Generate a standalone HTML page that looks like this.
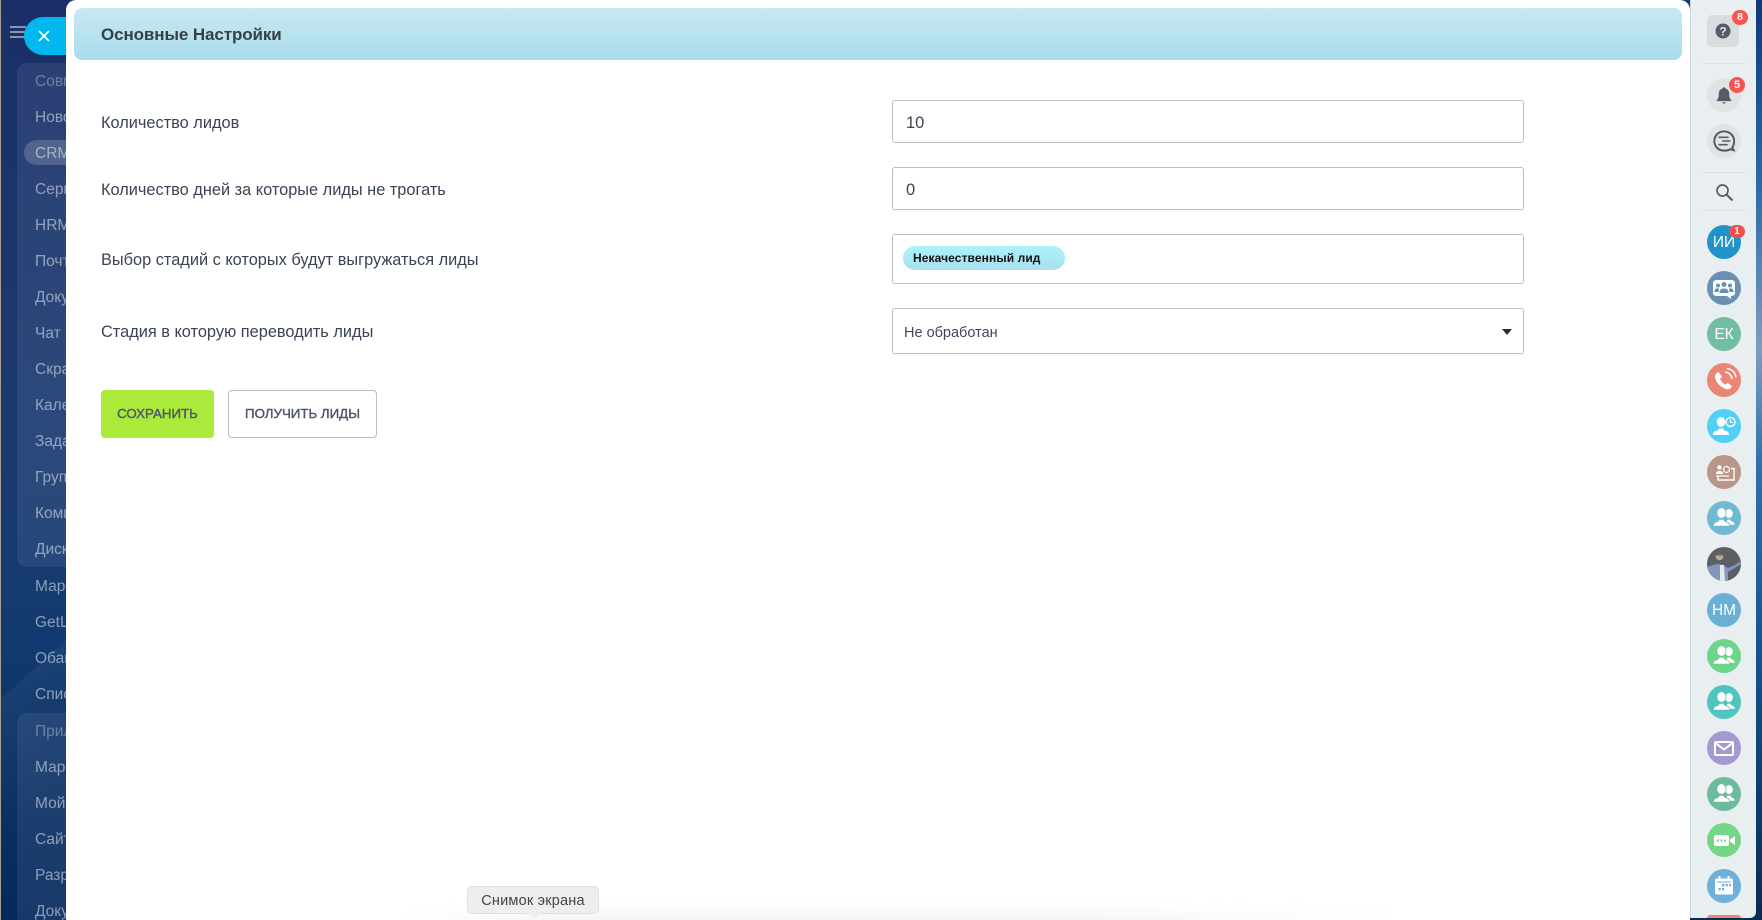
<!DOCTYPE html>
<html lang="ru"><head><meta charset="utf-8"><title>Основные Настройки</title>
<style>
html,body{margin:0;padding:0;width:1762px;height:920px;overflow:hidden;background:#123a70}
body{position:relative;font-family:"Liberation Sans","Noto Sans CJK SC",sans-serif}
.a{position:absolute;white-space:nowrap}
#bg{left:0;top:0;width:1762px;height:920px;background:linear-gradient(180deg,#1a2f68 0,#1c3a70 45%,#123a70 70%,#05295c 100%)}
#edge{left:0;top:0;width:1px;height:920px;background:#a89f8e}
.grp{background:rgba(255,255,255,.075);border-radius:10px}
.n{left:35px;font-size:15.5px;line-height:20px;color:rgba(255,255,255,.5);width:32px;overflow:hidden}
.l{left:101px;font-size:16.35px;line-height:20px;color:#3b4454}
.f{left:892px;width:630px;background:#fff;border:1px solid #bdbdbd;border-radius:3px}
.t{font-size:16.5px;line-height:20px;color:#3b4454}
.c{left:1707px;width:34px;height:34px;border-radius:50%;overflow:hidden}
.c svg{display:block}
.c span{display:block;width:34px;line-height:36px;text-align:center;color:#fff;font-size:15.5px}
.b{background:#fb5350;color:#fff;font-size:10.5px;font-weight:bold;text-align:center;border-radius:8px;line-height:15px;height:15px;width:16px}
.sep{left:1702px;width:43px;height:1px;background:#dde2e5}
.btn{top:390px;border-radius:4px;text-align:center;font-size:13.3px;color:#4d5768;-webkit-text-stroke:.4px #4d5768}
</style></head><body>
<svg width="0" height="0" style="position:absolute"><defs>
<g id="pp" fill="#fff"><ellipse cx="22" cy="12.500" rx="3.800" ry="4.500"/><path d="M19 23.800v-3c.8-.5 1.300-1 1.400-2.200h3.200c.1 1.200 .8 1.700 1.900 2.100 1.500.6 2.200 1.400 2.200 3.100z"/><g stroke="currentColor" stroke-width=".8"><ellipse cx="14.500" cy="12" rx="4.600" ry="5.300"/><path d="M6.200 25.200c0-2.400.8-3.400 2.800-4.100 1.600-.6 3-1 3.200-2.700h4.600c.2 1.700 1.600 2.100 3.200 2.700 2 .7 2.800 1.700 2.800 4.100z"/></g></g>
</defs></svg>

<div class="a" id="bg"></div>
<div class="a" style="left:0;top:640px;width:66px;height:280px;background:linear-gradient(135deg,rgba(255,255,255,.06) 0,rgba(255,255,255,.02) 40%,transparent 60%);clip-path:polygon(0 60px,66px 0,66px 280px,0 280px)"></div>
<div class="a" id="edge"></div>
<div class="a grp" style="left:17px;top:63px;width:70px;height:504px"></div>
<div class="a grp" style="left:17px;top:713px;width:70px;height:220px"></div>
<div class="a" style="left:10px;top:26px;width:16px;height:2px;background:#8f95a8"></div>
<div class="a" style="left:10px;top:31px;width:16px;height:2px;background:#8f95a8"></div>
<div class="a" style="left:10px;top:36px;width:16px;height:2px;background:#8f95a8"></div>
<div class="a" style="left:24px;top:140px;width:60px;height:25px;border-radius:13px;background:rgba(255,255,255,.18)"></div>
<div class="a n" style="top:72px;color:rgba(255,255,255,.32)">Совместная</div>
<div class="a n" style="top:108px">Новости</div>
<div class="a n" style="top:144px">CRM</div>
<div class="a n" style="top:180px">Сервисы</div>
<div class="a n" style="top:216px">HRM</div>
<div class="a n" style="top:252px">Почта</div>
<div class="a n" style="top:288px">Документы</div>
<div class="a n" style="top:324px">Чат и</div>
<div class="a n" style="top:360px">Скрам</div>
<div class="a n" style="top:396px">Календарь</div>
<div class="a n" style="top:432px">Задачи</div>
<div class="a n" style="top:468px">Группы</div>
<div class="a n" style="top:504px">Компания</div>
<div class="a n" style="top:540px">Диск</div>
<div class="a n" style="top:577px">Маркетинг</div>
<div class="a n" style="top:613px">GetLeads</div>
<div class="a n" style="top:649px">Обан</div>
<div class="a n" style="top:685px">Списки</div>
<div class="a n" style="top:722px;color:rgba(255,255,255,.32)">Приложения</div>
<div class="a n" style="top:758px">Маркет</div>
<div class="a n" style="top:794px">Мой</div>
<div class="a n" style="top:830px">Сайты</div>
<div class="a n" style="top:866px">Разработка</div>
<div class="a n" style="top:902px">Документы</div>

<div class="a" style="left:24px;top:17px;width:60px;height:38px;border-radius:19px;background:#00b8ef"></div>
<svg class="a" style="left:38px;top:30px" width="12" height="12" viewBox="0 0 12 12"><path d="M1 1l10 10M11 1L1 11" stroke="#fff" stroke-width="1.600" fill="none"/></svg>

<!-- right rail -->
<div class="a" style="left:1680px;top:0;width:82px;height:920px;background:linear-gradient(180deg,#0e3a78 0,#2a6aa5 20%,#7f9dbd 38%,#2f72a8 50%,#14558f 70%,#0e3f70 85%,#0a2c50 100%)"></div>

<!-- main panel -->
<div class="a" style="left:66px;top:0;width:1624px;height:920px;background:#fff;border-radius:10px 10px 0 0"></div>
<div class="a" style="left:400px;top:902px;width:1000px;height:18px;background:linear-gradient(180deg,rgba(235,235,235,0),rgba(235,235,235,.45));-webkit-mask-image:linear-gradient(90deg,transparent,#000 15%,#000 70%,transparent);mask-image:linear-gradient(90deg,transparent,#000 15%,#000 70%,transparent)"></div>
<div class="a" style="left:74px;top:8px;width:1608px;height:52px;border-radius:8px;background:linear-gradient(180deg,#c9e9f3,#a9dbec)"></div>
<div class="a" style="left:101px;top:25px;font-size:17px;line-height:20px;font-weight:bold;color:#36404a;letter-spacing:-.1px">Основные Настройки</div>

<div class="a l" style="top:113px">Количество лидов</div>
<div class="a l" style="top:180px">Количество дней за которые лиды не трогать</div>
<div class="a l" style="top:250px">Выбор стадий с которых будут выгружаться лиды</div>
<div class="a l" style="top:322px">Стадия в которую переводить лиды</div>

<div class="a f" style="top:100px;height:41px"></div>
<div class="a t" style="left:906px;top:113px">10</div>
<div class="a f" style="top:167px;height:41px"></div>
<div class="a t" style="left:906px;top:180px">0</div>
<div class="a f" style="top:234px;height:48px"></div>
<div class="a" style="left:903px;top:246px;width:162px;height:24px;border-radius:12px;background:linear-gradient(180deg,#acf2fc,#a9dff0)"></div>
<div class="a" style="left:913px;top:248px;font-size:12px;line-height:20px;font-weight:bold;color:#111;letter-spacing:.1px">Некачественный лид</div>
<div class="a f" style="top:308px;height:44px"></div>
<div class="a" style="left:904px;top:323px;font-size:14.500px;line-height:20px;color:#3f4759">Не обработан</div>
<svg class="a" style="left:1502px;top:329px" width="10" height="6" viewBox="0 0 10 6"><path d="M0 0h10L5 6z" fill="#2b2b2b"/></svg>

<div class="a btn" style="left:101px;width:113px;height:48px;background:#abe93b;line-height:47px">СОХРАНИТЬ</div>
<div class="a btn" style="left:228px;width:147px;height:46px;border:1px solid #bdbdbd;background:#fff;line-height:45px">ПОЛУЧИТЬ ЛИДЫ</div>

<div class="a" style="left:467px;top:886px;width:130px;height:26px;background:#eee;border:1px solid #e0e0e0;border-radius:5px;text-align:center;line-height:28px;font-size:14.500px;color:#444;letter-spacing:.2px">Снимок экрана</div>
<div class="a" style="left:527px;top:913px;width:0;height:0;border-left:7px solid transparent;border-right:7px solid transparent;border-top:6px solid #eee"></div>

<!-- right sidebar -->
<div class="a" style="left:1690px;top:0;width:66px;height:918px;background:#e9eef1;border-left:1px solid #c9d6dd;box-sizing:border-box;border-radius:0 0 6px 0"></div>
<div class="a" style="left:1707px;top:15px;width:32px;height:32px;border-radius:5px;background:#d7dcdf"></div>
<svg class="a" style="left:1715px;top:23px" width="16" height="16" viewBox="0 0 16 16"><circle cx="8" cy="8" r="7.500" fill="#535c68"/><text x="8" y="12.500" text-anchor="middle" font-family="Liberation Sans" font-size="12" font-weight="bold" fill="#e2e6e9">?</text></svg>
<div class="a b" style="left:1732px;top:10px">8</div>
<div class="a sep" style="top:63px"></div>

<div class="a c" style="top:78px;background:#dfe4e7"><svg width="34" height="34" viewBox="-4 -4 42 42"><path d="M17 7.500c-1 0-1.700.7-1.700 1.500-3.300.8-4.800 3.500-4.800 7 0 3.500-.6 5.500-2.500 7.500v1h18v-1c-1.900-2-2.500-4-2.500-7.500 0-3.500-1.500-6.200-4.800-7 0-.8-.7-1.500-1.700-1.500zM15 26h4c0 1-1 1.800-2 1.800s-2-.8-2-1.800z" fill="#535c68"/></svg></div>
<div class="a b" style="left:1729px;top:77px;width:16px;height:16px;border-radius:50%;line-height:16px;font-size:11px">5</div>

<div class="a c" style="top:124px;background:#dfe4e7"><svg width="34" height="34" viewBox="-1.500 -1.500 37 37" fill="none" stroke="#535c68"><path d="M26 24c1.500-2 2-4 2-7 0-6-5-10.500-11-10.500S6.500 11 6.500 17 11 27.500 17 27.500c3 0 5.500-.5 7-1.500l3.500 1z" stroke-width="2.200"/><path d="M11 13h11M15 17h9M11 21h10" stroke-width="1.700"/></svg></div>
<div class="a sep" style="top:172px"></div>
<svg class="a" style="left:1715px;top:183px" width="19" height="19" viewBox="0 0 19 19" fill="none" stroke="#535c68" stroke-width="1.700"><circle cx="7.500" cy="7.500" r="5.500"/><path d="M11.500 11.500l6 6" stroke-width="2"/></svg>
<div class="a sep" style="top:210px"></div>

<div class="a c" style="top:225px;background:#2193c9"><span>ИИ</span></div>
<div class="a b" style="left:1729px;top:225px;width:16px;height:13px;border-radius:7px;line-height:13px;font-size:10px;background:#f0504f">1</div>
<div class="a c" style="top:271px;background:#6a90b3"><svg width="34" height="34" viewBox="0 0 34 34"><path d="M9 9h16a3 3 0 0 1 3 3v10a3 3 0 0 1-3 3h-1v3l-4-3H9a3 3 0 0 1-3-3V12a3 3 0 0 1 3-3z" fill="#fff"/><g fill="#6a90b3"><circle cx="17" cy="13.500" r="2.500"/><path d="M12.500 22c0-3 1.500-4.500 4.500-4.500s4.500 1.500 4.500 4.500z"/><circle cx="11" cy="14.500" r="2"/><path d="M7.500 21c0-2.500 1-3.700 3.500-3.700l1 .7-.5 3z"/><circle cx="23" cy="14.500" r="2"/><path d="M26.500 21c0-2.500-1-3.700-3.500-3.700l-1 .7.500 3z"/></g></svg></div>
<div class="a c" style="top:317px;background:#72bda3"><span>ЕК</span></div>
<div class="a c" style="top:363px;background:#e98674"><svg width="34" height="34" viewBox="0 0 34 34"><path d="M11.500 9l3.500 4.800-2 2c1 2.500 3 4.700 5.500 6l2.200-2 4.300 3.500c-1 2-2.800 3.500-5 3-6-1.200-11.200-7-12-12-.3-2.300 1.300-4.600 3.500-5.300z" fill="#fff"/><path d="M18 9c3.800.5 6.500 3 7 7M20 5.500c5 .8 8.500 4 9 9" stroke="#fff" stroke-width="1.500" fill="none"/></svg></div>
<div class="a c" style="top:409px;background:#50d0f7"><svg width="34" height="34" viewBox="0 0 34 34"><g fill="#fff"><ellipse cx="14" cy="13" rx="4.300" ry="5"/><path d="M6 26c0-2.300.8-3.300 2.700-4 1.600-.6 3-1 3.200-2.500h4.200c.2 1.500 1.600 1.900 3.200 2.500 1.900.7 2.700 1.700 2.700 4z"/></g><circle cx="23.500" cy="13" r="4.500" fill="none" stroke="#fff" stroke-width="1.400"/><path d="M23.500 10.500V13.500h2.500" stroke="#fff" stroke-width="1.100" fill="none"/></svg></div>
<div class="a c" style="top:455px;background:#b89788"><svg width="34" height="34" viewBox="0 0 34 34" fill="none" stroke="#fff"><path d="M11 21v4h16V13.500h-3" stroke-width="1.400"/><circle cx="12.500" cy="12.500" r="2.200" fill="#fff" stroke="none"/><path d="M9 19c0-2 1-3 3.500-3s3.500 1 3.500 3z" fill="#fff" stroke="none"/><circle cx="19.500" cy="14.500" r="3" stroke-width="1.200"/><path d="M9 21h13" stroke-width="1.200"/></svg></div>
<div class="a c" style="top:501px;background:#6fbad2;color:#6fbad2"><svg width="34" height="34" viewBox="0 0 34 34"><use href="#pp"/></svg></div>
<div class="a c" style="top:547px;background:#5c5f63"><svg width="34" height="34" viewBox="0 0 34 34"><path d="M0 20l6-2 5-1 5 1 5 3 7-3 6-4v3l-8 5-5 3v9H6c-3-3-5-8-6-14z" fill="#8098bd"/><path d="M13 18h4l1 16h-5z" fill="#e8e8ea"/><circle cx="12.500" cy="9.500" r="3.800" fill="#b8a89e"/><path d="M9 7.500c1-2.500 6-2.500 7 0l-.5 1h-6z" fill="#6a6460"/></svg></div>
<div class="a c" style="top:593px;background:#6aafd6"><span>НМ</span></div>
<div class="a c" style="top:639px;background:#6dd48a;color:#6dd48a"><svg width="34" height="34" viewBox="0 0 34 34"><use href="#pp"/></svg></div>
<div class="a c" style="top:685px;background:#51c4bd;color:#51c4bd"><svg width="34" height="34" viewBox="0 0 34 34"><use href="#pp"/></svg></div>
<div class="a c" style="top:731px;background:#a599d1"><svg width="34" height="34" viewBox="0 0 34 34" fill="none" stroke="#fff"><rect x="8" y="11" width="18" height="13" rx="1" stroke-width="2"/><path d="M8.500 12l8.500 6.500 8.500-6.500" stroke-width="2"/></svg></div>
<div class="a c" style="top:777px;background:#6dbb9d;color:#6dbb9d"><svg width="34" height="34" viewBox="0 0 34 34"><use href="#pp"/></svg></div>
<div class="a c" style="top:823px;background:#76d687"><svg width="34" height="34" viewBox="0 0 34 34"><rect x="7" y="12" width="15" height="11" rx="2" fill="#fff"/><path d="M23 16.500l5-3.500v9l-5-3.500z" fill="#fff"/><g fill="#76d687"><rect x="10" y="16.500" width="2" height="2"/><rect x="13.500" y="16.500" width="2" height="2"/><rect x="17" y="16.500" width="2" height="2"/></g></svg></div>
<div class="a c" style="top:869px;background:#6db0d8"><svg width="34" height="34" viewBox="0 0 34 34"><rect x="8" y="9.500" width="18" height="16" rx="1.500" fill="#fff"/><rect x="11.500" y="7" width="2" height="4.500" fill="#fff"/><rect x="20.500" y="7" width="2" height="4.500" fill="#fff"/><g fill="#6db0d8"><rect x="10" y="12.500" width="14" height="1"/><rect x="15" y="15" width="2.300" height="2.300"/><rect x="18.500" y="15" width="2.300" height="2.300"/><rect x="22" y="15" width="2" height="2.300"/><rect x="11.500" y="19" width="2.300" height="2.300"/><rect x="15" y="19" width="2.300" height="2.300"/></g></svg></div>
<div class="a" style="left:1707px;top:915px;width:34px;height:3px;border-radius:17px 17px 0 0;background:#e98674"></div>
</body></html>
